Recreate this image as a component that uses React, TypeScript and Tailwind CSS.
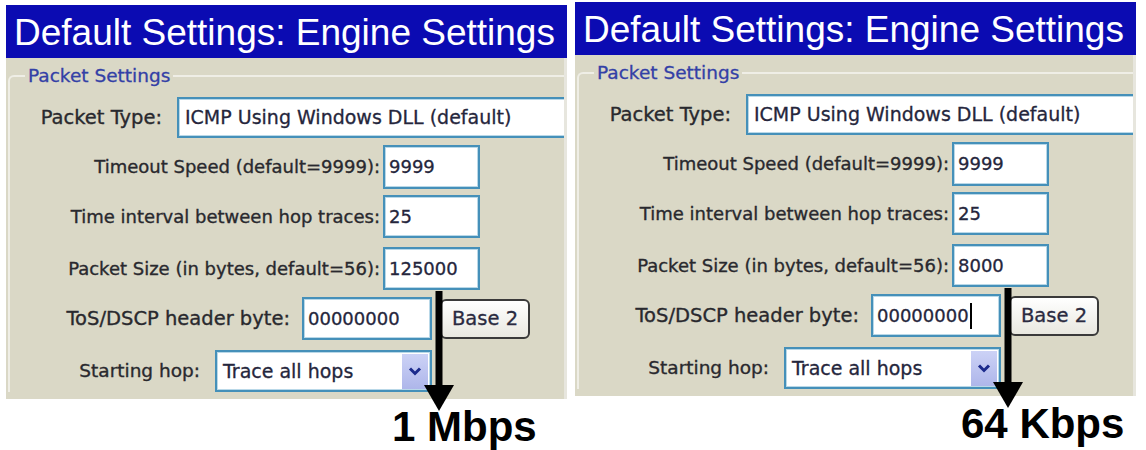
import type { ReactNode } from "react";

// Engine settings dialog, shown twice side by side with the resulting link speed.

const ui = "font-['DejaVu_Sans',sans-serif]";

function Box({ children, className }: { children: ReactNode; className: string }) {
  return (
    <div
      className={`h-full flex items-center bg-white border-2 border-[#4590b9] shadow-[inset_0_0_0_1px_#b9d8e8] leading-none text-[#25263c] [-webkit-text-stroke:0.3px] whitespace-nowrap overflow-hidden ${className}`}
    >
      {children}
    </div>
  );
}

function Label({ children, className }: { children: ReactNode; className: string }) {
  return (
    <span className={`shrink-0 text-right leading-none text-[#29292e] [-webkit-text-stroke:0.35px] whitespace-nowrap ${className}`}>
      {children}
    </span>
  );
}

function Chevron() {
  return (
    <svg width="14" height="10" viewBox="0 0 14 10">
      <path d="M2 2.5 L7 7.5 L12 2.5" fill="none" stroke="#1b2a8c" strokeWidth="3" />
    </svg>
  );
}

function Arrow() {
  return (
    <svg className="absolute left-[418px] top-[286px]" width="30" height="120" viewBox="0 0 30 120">
      <rect x="11.5" y="0" width="7" height="96" fill="#000" />
      <polygon points="0,94 30,94 15,120" fill="#000" />
    </svg>
  );
}

type PanelProps = {
  packetSize: string;
  speed: string;
  caret?: boolean;
  className: string;
};

function Panel({ packetSize, speed, caret, className }: PanelProps) {
  return (
    <div className={`relative w-[561px] shrink-0 ${className}`}>
      <div className="h-[53px] bg-[#0b0bb2] pl-[8px] pt-[2px] text-white text-[37px] leading-[51px] font-['Liberation_Sans',Arial,sans-serif] whitespace-nowrap overflow-hidden">
        Default Settings: Engine Settings
      </div>

      <div className={`h-[341px] bg-[#dad8c6] overflow-hidden pt-[8px] border-r-[3px] border-[#e7e6de] ${ui}`}>
        <fieldset className="ml-[2px] w-[640px] border-t-2 border-l-2 border-[#efeee6] rounded-tl-[6px] pt-[11px]">
          <legend className="ml-[15px] px-[3px] text-[18.5px] leading-[20px] text-[#3340a6] [-webkit-text-stroke:0.3px]">
            Packet Settings
          </legend>

          <div className="flex items-center h-[41px]">
            <Label className="w-[152px] text-[19.5px]">Packet Type:</Label>
            <div className="ml-[15px] w-[420px] h-full">
              <Box className="pl-[6px] text-[19px]">ICMP Using Windows DLL (default)</Box>
            </div>
          </div>

          <div className="flex items-center h-[44px] mt-[7px]">
            <Label className="w-[370px] text-[18px]">Timeout Speed (default=9999):</Label>
            <div className="ml-[3px] w-[97px] h-full">
              <Box className="pl-[4px] text-[18px]">9999</Box>
            </div>
          </div>

          <div className="flex items-center h-[43px] mt-[6px]">
            <Label className="w-[370px] text-[18px]">Time interval between hop traces:</Label>
            <div className="ml-[3px] w-[97px] h-full">
              <Box className="pl-[4px] text-[18px]">25</Box>
            </div>
          </div>

          <div className="flex items-center h-[43px] mt-[9px]">
            <Label className="w-[370px] text-[18px]">Packet Size (in bytes, default=56):</Label>
            <div className="ml-[3px] w-[97px] h-full">
              <Box className="pl-[4px] text-[18px]">{packetSize}</Box>
            </div>
          </div>

          <div className="flex items-center h-[43px] mt-[7px]">
            <Label className="w-[280px] text-[19.5px]">ToS/DSCP header byte:</Label>
            <div className="ml-[12px] w-[130px] h-full">
              <Box className="pl-[4px] text-[18px]">
                00000000
                {caret && <span className="ml-[1px] w-[2px] h-[26px] bg-black" />}
              </Box>
            </div>
            <button className="ml-[8px] w-[90px] h-[40px] border-2 border-[#3a3a3a] rounded-[6px] bg-linear-to-b from-white to-[#e9e8e0] text-[19.5px] leading-none text-[#2a2a40] [-webkit-text-stroke:0.3px]">
              Base 2
            </button>
          </div>

          <div className="flex items-center h-[42px] mt-[10px]">
            <Label className="w-[190px] text-[18.5px]">Starting hop:</Label>
            <div className="ml-[15px] w-[217px] h-full">
              <Box className="pl-[6px] pr-[2px] text-[19px]">
                <span className="flex-1">Trace all hops</span>
                <span className="w-[26px] h-[35px] flex items-center justify-center bg-linear-to-b from-[#ccd2f6] to-[#aeb6ea]">
                  <Chevron />
                </span>
              </Box>
            </div>
          </div>
        </fieldset>
      </div>

      <div className="mt-[7px] pl-[386px] text-[42px] leading-[42px] font-bold text-black font-['Liberation_Sans',Arial,sans-serif] whitespace-nowrap">
        {speed}
      </div>

      <Arrow />
    </div>
  );
}

export default function App() {
  return (
    <div className="w-[1146px] h-[450px] bg-white flex items-start pl-[6px] gap-[8px] overflow-hidden">
      <Panel packetSize="125000" speed="1 Mbps" className="mt-[5px]" />
      <Panel packetSize="8000" speed="64 Kbps" caret className="mt-[2px]" />
    </div>
  );
}
